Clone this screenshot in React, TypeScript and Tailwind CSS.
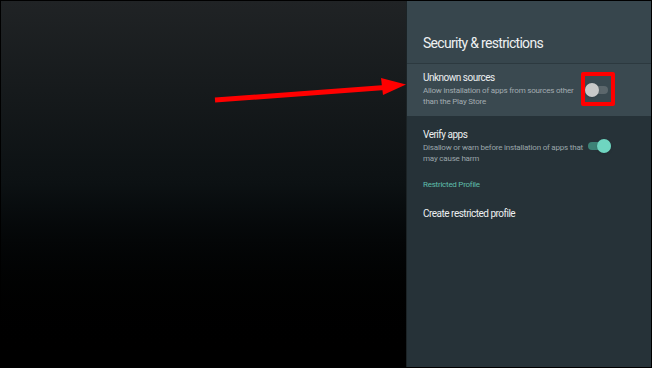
import React from 'react';

const font = { fontFamily: 'Roboto, "Liberation Sans", sans-serif' };

const Toggle: React.FC<{ on?: boolean }> = ({ on }) => (
  <div className="relative w-[23px] h-[14px] flex items-center">
    <div className={`w-full h-[8px] rounded-full ${on ? 'bg-[#3d8276]' : 'bg-[#5c676c]'}`} />
    <div
      className={`absolute top-0 w-[14px] h-[14px] rounded-full shadow-sm ${on ? 'right-0 bg-[#6fd5c0]' : 'left-0 bg-[#c9c9c9]'}`}
    />
  </div>
);

export default function App() {
  return (
    <div className="w-[652px] h-[368px] border border-black flex bg-black" style={font}>
      {/* background area */}
      <div className="relative flex-1 bg-gradient-to-b from-[#202325] via-[#0c1113] to-black">
        <svg className="absolute left-[212px] top-[76px]" width="196" height="28" viewBox="0 0 196 28">
          <line x1="2" y1="23" x2="172" y2="10.5" stroke="#ff0000" strokeWidth="5" />
          <polygon points="168,1 193,7.5 170,18" fill="#ff0000" />
        </svg>
      </div>

      {/* settings panel */}
      <div className="relative w-[244px] bg-[#263238] shadow-[-1px_0_0_#1b2326]">
        <div className="h-[63px] bg-[#37464d] border-b border-[#2c393f] pl-[16px] pt-[33px]">
          <h1 className="text-[14px] leading-[18px] text-[#eef1f2] tracking-[-0.7px]">Security &amp; restrictions</h1>
        </div>

        <div className="h-[52px] bg-[#3a4950] pl-[16px] pr-[43px] flex items-center">
          <div className="w-[154px] -mt-[2px]">
            <div className="text-[10px] leading-[13px] text-[#eceff0] tracking-[-0.5px]">Unknown sources</div>
            <div className="text-[8px] leading-[11px] text-[#a3acb0] tracking-[-0.2px] mt-[1px]">
              Allow installation of apps from sources other than the Play Store
            </div>
          </div>
          <div className="ml-auto">
            <Toggle />
          </div>
        </div>

        <div className="pl-[16px] pr-[40px] pt-[12px] flex items-center">
          <div className="w-[166px]">
            <div className="text-[10px] leading-[13px] text-[#eceff0] tracking-[-0.5px]">Verify apps</div>
            <div className="text-[8px] leading-[11px] text-[#9aa5aa] tracking-[-0.2px] mt-[1px]">
              Disallow or warn before installation of apps that may cause harm
            </div>
          </div>
          <div className="ml-auto">
            <Toggle on />
          </div>
        </div>

        <div className="pl-[16px] pt-[15px] text-[8px] leading-[11px] text-[#5fbfab] tracking-[-0.25px]">Restricted Profile</div>

        <div className="pl-[16px] pt-[17px] text-[10px] leading-[13px] text-[#eceff0] tracking-[-0.5px]">Create restricted profile</div>

        {/* red highlight box */}
        <div className="absolute left-[174px] top-[71px] w-[34px] h-[34px] border-[4px] border-[#ff0000] rounded-[2px]" />
      </div>
    </div>
  );
}
